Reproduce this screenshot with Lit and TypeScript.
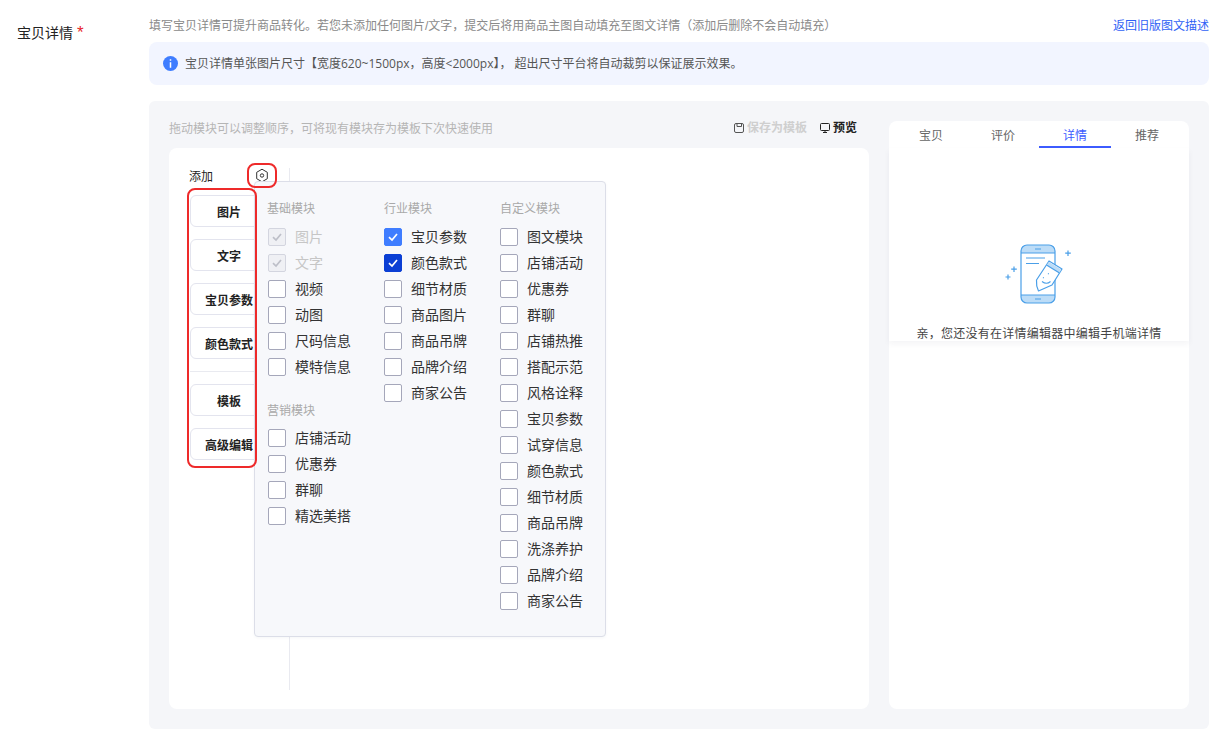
import { LitElement, html, css, svg } from "lit";
import { customElement } from "lit/decorators.js";

type Item = { label: string; state?: "on" | "dark" | "disabled" };
const plain = (xs: string[]): Item[] => xs.map((label) => ({ label }));

const basic: Item[] = [
  { label: "图片", state: "disabled" },
  { label: "文字", state: "disabled" },
  ...plain(["视频", "动图", "尺码信息", "模特信息"]),
];
const marketing = plain(["店铺活动", "优惠券", "群聊", "精选美搭"]);
const industry: Item[] = [
  { label: "宝贝参数", state: "on" },
  { label: "颜色款式", state: "dark" },
  ...plain(["细节材质", "商品图片", "商品吊牌", "品牌介绍", "商家公告"]),
];
const custom = plain([
  "图文模块", "店铺活动", "优惠券", "群聊", "店铺热推", "搭配示范", "风格诠释", "宝贝参数",
  "试穿信息", "颜色款式", "细节材质", "商品吊牌", "洗涤养护", "品牌介绍", "商家公告",
]);

@customElement("app-root")
export class AppRoot extends LitElement {
  static styles = css`
    :host {
      display: block;
      width: 1228px;
      height: 739px;
      overflow: hidden;
      background: #fff;
      font-family: "Liberation Sans", "Noto Sans CJK SC", sans-serif;
      color: #333;
    }
    .page { display: flex; height: 739px; box-sizing: border-box; padding: 16px 19px 10px 0; }
    .label { width: 149px; flex: none; box-sizing: border-box; padding: 7px 0 0 17px; font-size: 14px; line-height: 20px; color: #222; }
    .label i { font-style: normal; color: #e8242c; font-size: 17px; }
    .main { width: 1060px; display: flex; flex-direction: column; }
    .top { display: flex; justify-content: space-between; height: 18px; font-size: 12px; line-height: 20px; color: #8a8a8a; margin-bottom: 8px; }
    .top a { color: #2f62f5; }
    .info { height: 43px; border-radius: 8px; background: #f2f5ff; display: flex; align-items: center; padding: 0 14px; gap: 7px; font-size: 12px; color: #555; margin-bottom: 16px; font-family: "Open Sans", "Noto Sans CJK SC", sans-serif; }
    .info svg { flex: none; }
    .info span { margin-top: -2px; }
    .panel { flex: 1; display: grid; grid-template-columns: 700px 300px; gap: 20px; padding: 20px; background: #f5f6f9; border-radius: 6px; }
    .left { display: flex; flex-direction: column; min-height: 0; }
    .bar { height: 27px; display: flex; justify-content: space-between; font-size: 12px; line-height: 14px; color: #b5b5b5; padding-right: 12px; }
    .bar .tip { margin-top: 1px; }
    .acts { display: flex; gap: 13px; font-weight: 600; }
    .act { display: flex; gap: 3px; align-items: flex-start; }
    .act svg { margin-top: 1px; }
    .act.off { color: #cfcfcf; }
    .act.now { color: #222; }
    .editor { position: relative; flex: 1; background: #fff; border-radius: 8px; padding: 20px 0 19px 0; box-sizing: border-box; }
    .rail { width: 120px; height: 100%; border-right: 1px solid #e9eaf0; overflow: hidden; }
    .add { height: 16px; line-height: 18px; font-size: 12px; color: #222; padding-left: 20px; margin-bottom: 11px; }
    .stack { display: flex; flex-direction: column; gap: 12px; margin-left: 21px; }
    .card { width: 78px; height: 32px; box-sizing: border-box; border: 1px solid #e3e4ee; border-radius: 6px; font-size: 12px; font-weight: 600; color: #222; display: flex; align-items: center; justify-content: center; background: #fff; white-space: nowrap; }
    .sep { height: 1px; background: #e9eaf0; width: 80px; }
    .gear { position: absolute; left: 86px; top: 20px; display: block; }
    .pop { position: absolute; left: 85px; top: 33px; width: 352px; height: 456px; box-sizing: border-box; padding: 18px 0 0 12px; background: #f7f8fb; border: 1px solid #dcdee8; border-radius: 4px; display: flex; box-shadow: 0 1px 3px rgba(30, 40, 80, .04); }
    .col { width: 116px; flex: none; }
    .col.first { width: 117px; }
    .col.first .row { padding-left: 1px; }
    .sec + .sec { margin-top: 26px; }
    .sec + .sec .ttl { margin-bottom: 11px; }
    .ttl { height: 16px; line-height: 18px; font-size: 12px; color: #a9a9a9; margin-bottom: 12px; }
    .rows { display: flex; flex-direction: column; gap: 8px; }
    .row { display: flex; align-items: center; gap: 9px; height: 18px; font-size: 14px; color: #333; }
    .row span:last-child { margin-top: -2px; }
    .box { width: 18px; height: 18px; box-sizing: border-box; border: 1px solid #a5a7ba; border-radius: 2px; background: #fff; flex: none; display: flex; align-items: center; justify-content: center; }
    .box svg { display: block; }
    .row.on .box { background: #3f7dff; border-color: #3f7dff; }
    .row.dark .box { background: #0b3fd4; border-color: #0b3fd4; }
    .row.disabled .box { background: #eff0f4; border-color: #d3d5df; }
    .row.disabled { color: #c6c6c6; }
    .mark { position: absolute; box-sizing: border-box; border: 2px solid #ee2a2a; border-radius: 8px; pointer-events: none; }
    .mark.a { left: 78px; top: 15px; width: 30px; height: 25px; }
    .mark.b { left: 18px; top: 40px; width: 70px; height: 280px; }
    .preview { background: #fff; border-radius: 8px; display: flex; flex-direction: column; min-height: 0; }
    .tabs { display: grid; grid-template-columns: repeat(4, 72px); padding: 0 6px; height: 27px; }
    .tab { text-align: center; font-size: 12px; line-height: 14px; padding-top: 8px; color: #666; box-sizing: border-box; }
    .tab.active { color: #3d5cff; border-bottom: 2px solid #3d5cff; }
    .empty { height: 193px; display: flex; flex-direction: column; align-items: center; box-shadow: 0 3px 6px rgba(30, 40, 80, .05); padding-top: 92px; box-sizing: border-box; }
    .empty svg { display: block; flex: none; }
    .empty p { flex: none; margin: 16px 0 0; font-size: 12px; line-height: 16px; letter-spacing: .25px; color: #444; white-space: nowrap; }
  `;

  private check(color: string) {
    return html`<svg width="12" height="12" viewBox="0 0 12 12" fill="none"><path d="M2 6.2 5 9l5-6" stroke=${color} stroke-width="1.7"/></svg>`;
  }

  private row(it: Item) {
    const mark = it.state === "disabled" ? this.check("#bdbfc8") : it.state ? this.check("#fff") : "";
    return html`<div class="row ${it.state ?? ""}"><span class="box">${mark}</span><span>${it.label}</span></div>`;
  }

  private sec(title: string, items: Item[]) {
    return html`<div class="sec"><div class="ttl">${title}</div><div class="rows">${items.map((i) => this.row(i))}</div></div>`;
  }

  private phone() {
    const c = "#4a9fe8";
    return html`<svg width="80" height="70" viewBox="0 0 80 70" fill="none">
      ${svg`
        <path d="M22 13v-2a6 6 0 0 1 6-6h22a6 6 0 0 1 6 6v2z" fill="#bcdcf7"/>
        <path d="M22 55v2a6 6 0 0 0 6 6h22a6 6 0 0 0 6-6v-2z" fill="#bcdcf7"/>
        <rect x="22" y="5" width="34" height="58" rx="6" stroke=${c} stroke-width="1.2"/>
        <path d="M22 13h34M22 55h34" stroke=${c} stroke-width="1"/>
        <path d="M36 9h6M36 59h6" stroke=${c} stroke-width="1.1"/>
        <path d="M27 18h19M27 23.500h13" stroke=${c} stroke-width="1.2"/>
        <path d="M50 21 63 29 53 45 39.500 51Q37 46 37.500 40z" fill="#fff" stroke=${c} stroke-width="1.2" stroke-linejoin="round"/>
        <path d="M50 22 62 29.500 60.500 33 47.500 25z" fill="#bcdcf7"/>
        <path d="M47.500 25 60.500 33" stroke=${c} stroke-width="1.1"/>
        <path d="M44 37.500l.8.5M49 33.500l.8.5" stroke=${c} stroke-width="1.3"/>
        <path d="M43 41.500q4.500 3.500 8.500 0" stroke=${c} stroke-width="1.1"/>
        <path d="M69 10.500v5.500M66.200 13.200h5.600M15 26.500v5.500M12.200 29.200h5.600M9 34.500v5M6.500 37h5" stroke=${c} stroke-width="1.2"/>
      `}
    </svg>`;
  }

  render() {
    return html`<div class="page">
      <div class="label">宝贝详情 <i>*</i></div>
      <div class="main">
        <div class="top">
          <span>填写宝贝详情可提升商品转化。若您未添加任何图片/文字，提交后将用商品主图自动填充至图文详情（添加后删除不会自动填充）</span>
          <a>返回旧版图文描述</a>
        </div>
        <div class="info">
          <svg width="15" height="15" viewBox="0 0 15 15"><circle cx="7.500" cy="7.500" r="7.500" fill="#3f7dff"/><path d="M7.500 3.200v1.500M7.500 6.300v5.500" stroke="#fff" stroke-width="1.500"/></svg>
          <span>宝贝详情单张图片尺寸【宽度620~1500px，高度&lt;2000px】， 超出尺寸平台将自动裁剪以保证展示效果。</span>
        </div>
        <div class="panel">
          <div class="left">
            <div class="bar">
              <span class="tip">拖动模块可以调整顺序，可将现有模块存为模板下次快速使用</span>
              <div class="acts">
                <span class="act off">
                  <svg width="10" height="12" viewBox="0 0 10 12" fill="none"><rect x=".5" y="1.500" width="9" height="9" rx="1.500" stroke="#555"/><path d="M3 1.500v3h4.500v-3" stroke="#555"/></svg>
                  保存为模板
                </span>
                <span class="act now">
                  <svg width="10" height="12" viewBox="0 0 10 12" fill="none"><rect x=".5" y="1.500" width="9" height="7" rx="1" stroke="#222"/><path d="M5 8.500v2M3 10.500h4" stroke="#222"/></svg>
                  预览
                </span>
              </div>
            </div>
            <div class="editor">
              <div class="rail">
                <div class="add">添加</div>
                <div class="stack">
                  ${["图片", "文字", "宝贝参数", "颜色款式"].map((t) => html`<div class="card">${t}</div>`)}
                  <div class="sep"></div>
                  ${["模板", "高级编辑"].map((t) => html`<div class="card">${t}</div>`)}
                </div>
              </div>
              <svg class="gear" width="14" height="15" viewBox="0 0 14 15" fill="none">
                <path d="M7 1.200 12.300 4.300V10.700L7 13.800 1.700 10.700V4.300z" stroke="#333" stroke-width="1" stroke-linejoin="round"/>
                <circle cx="7" cy="7.500" r="1.700" stroke="#333"/>
              </svg>
              <div class="pop">
                <div class="col first">${this.sec("基础模块", basic)}${this.sec("营销模块", marketing)}</div>
                <div class="col">${this.sec("行业模块", industry)}</div>
                <div class="col">${this.sec("自定义模块", custom)}</div>
              </div>
              <div class="mark a"></div>
              <div class="mark b"></div>
            </div>
          </div>
          <div class="preview">
            <div class="tabs">
              <div class="tab">宝贝</div>
              <div class="tab">评价</div>
              <div class="tab active">详情</div>
              <div class="tab">推荐</div>
            </div>
            <div class="empty">
              ${this.phone()}
              <p>亲，您还没有在详情编辑器中编辑手机端详情</p>
            </div>
          </div>
        </div>
      </div>
    </div>`;
  }
}
